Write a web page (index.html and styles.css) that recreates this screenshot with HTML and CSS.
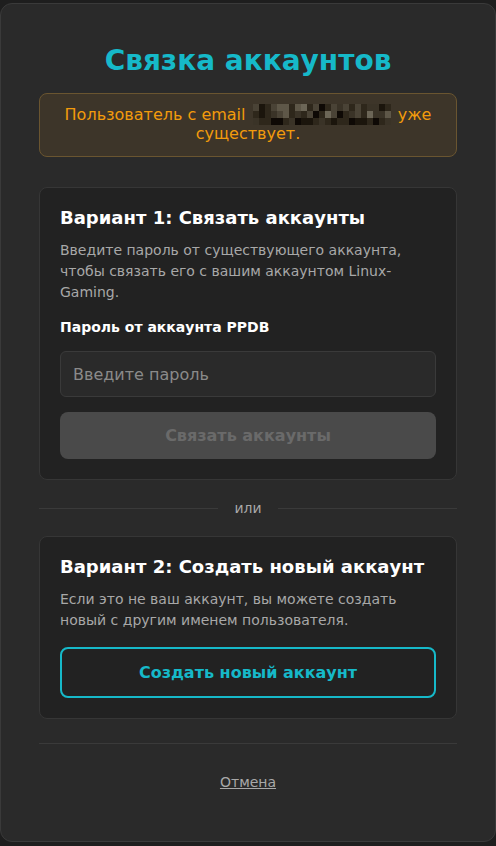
FILE: index.html
```html
<!DOCTYPE html>
<html lang="ru">
<head>
<meta charset="utf-8">
<link rel="stylesheet" href="styles.css">
</head>
<body>
<div class="modal">
  <h1 class="title">Связка аккаунтов</h1>
  <div class="warning">Пользователь с email <span class="mosaic"><i class="a"></i><i class="d"></i><i class="b"></i><i class="a"></i><i class="e"></i><i class="e"></i><i class="b"></i><i class="e"></i><i class="f"></i><i class="b"></i><i class="a"></i><i class="g"></i><i class="b"></i><i class="a"></i><i class="c"></i><i class="a"></i><i class="b"></i><i class="a"></i><i class="b"></i><i class="c"></i><i class="c"></i><i class="d"></i><i class="b"></i><i class="b"></i><i class="d"></i><i class="b"></i><i class="c"></i><i class="a"></i><i class="e"></i><i class="b"></i><i class="c"></i><i class="b"></i><i class="a"></i><i class="g"></i><i class="b"></i><i class="f"></i><i class="a"></i><i class="g"></i><i class="b"></i><i class="c"></i><i class="a"></i><i class="b"></i><i class="f"></i><i class="c"></i><i class="c"></i><i class="e"></i><i class="c"></i><i class="b"></i><i class="b"></i><i class="g"></i><i class="g"></i><i class="b"></i><i class="c"></i><i class="g"></i><i class="d"></i><i class="d"></i><i class="b"></i><i class="c"></i><i class="b"></i><i class="d"></i><i class="b"></i><i class="b"></i><i class="g"></i><i class="d"></i><i class="d"></i><i class="b"></i><i class="g"></i><i class="b"></i><i class="c"></i></span> уже существует.</div>

  <section class="card">
    <h2 class="card-title">Вариант 1: Связать аккаунты</h2>
    <p class="card-text">Введите пароль от существующего аккаунта, чтобы связать его с вашим аккаунтом Linux-Gaming.</p>
    <label class="field-label" for="pw">Пароль от аккаунта PPDB</label>
    <input class="input" id="pw" type="password" placeholder="Введите пароль">
    <button class="btn btn-disabled" type="button">Связать аккаунты</button>
  </section>

  <div class="divider"><span class="line"></span><span class="or">или</span><span class="line"></span></div>

  <section class="card">
    <h2 class="card-title">Вариант 2: Создать новый аккаунт</h2>
    <p class="card-text">Если это не ваш аккаунт, вы можете создать новый с другим именем пользователя.</p>
    <button class="btn btn-outline" type="button">Создать новый аккаунт</button>
  </section>

  <div class="footer">
    <a class="cancel" href="#">Отмена</a>
  </div>
</div>
</body>
</html>
```

FILE: styles.css
```css
* { box-sizing: border-box; }
html, body {
  margin: 0;
  padding: 0;
  background: #1e1e1e;
  font-family: "DejaVu Sans", "Noto Sans", sans-serif;
}
body { padding-top: 3px; }
.modal {
  width: 496px;
  height: 839px;
  background: #2a2a2a;
  border: 1px solid #3a3a3a;
  border-radius: 12px;
  padding: 40px 38px 0;
  display: flex;
  flex-direction: column;
}
.title {
  margin: 0 0 15px;
  text-align: center;
  color: #16b9c9;
  font-size: 28px;
  line-height: 34px;
  font-weight: bold;
}
.warning {
  background: #3d3529;
  border: 1px solid #6a5530;
  border-radius: 8px;
  color: #f29b0c;
  font-size: 16px;
  line-height: 19px;
  text-align: center;
  padding: 11px 20px 13px;
  margin-bottom: 30px;
}
.mosaic {
  display: inline-grid;
  grid-template-columns: repeat(23, 6px);
  grid-auto-rows: 7px;
  vertical-align: middle;
  margin: -8px 2px -6px;
}
.mosaic i { display: block; }
.mosaic .a { background: #4a4336; }
.mosaic .b { background: #2e271b; }
.mosaic .c { background: #3a3327; }
.mosaic .d { background: #1b150c; }
.mosaic .e { background: #5e5748; }
.mosaic .f { background: #6c6657; }
.mosaic .g { background: #0e0905; }
.card {
  background: #222222;
  border: 1px solid #363636;
  border-radius: 8px;
  padding: 18px 20px 20px;
  display: flex;
  flex-direction: column;
}
.card-title {
  margin: 0;
  color: #ffffff;
  font-size: 18px;
  line-height: 24px;
  font-weight: bold;
}
.card-text {
  margin: 10px 0 0;
  color: #a8a8a8;
  font-size: 14px;
  line-height: 21px;
}
.field-label {
  margin-top: 15px;
  color: #ffffff;
  font-size: 14px;
  line-height: 18px;
  font-weight: bold;
}
.input {
  margin-top: 15px;
  height: 46px;
  background: #2a2a2a;
  border: 1px solid #3a3a3a;
  border-radius: 6px;
  padding: 0 12px;
  font-family: inherit;
  font-size: 16px;
  color: #ddd;
}
.input::placeholder { color: #8a8a8a; }
.btn {
  font-family: inherit;
  font-size: 16px;
  font-weight: bold;
  border-radius: 8px;
  cursor: pointer;
}
.btn-disabled {
  margin-top: 15px;
  height: 47px;
  background: #4a4a4a;
  border: none;
  color: #6a6a6a;
}
.btn-outline {
  margin-top: 16px;
  height: 51px;
  background: transparent;
  border: 2px solid #16b9c9;
  color: #16b9c9;
}
.divider {
  display: flex;
  align-items: center;
  gap: 16px;
  margin: 19px 0;
}
.divider .line { flex: 1; height: 1px; background: #3a3a3a; }
.divider .or { color: #a8a8a8; font-size: 14px; line-height: 18px; }
.footer {
  margin-top: 24px;
  border-top: 1px solid #3a3a3a;
  padding-top: 28px;
  text-align: center;
}
.cancel {
  color: #a8a8a8;
  font-size: 14px;
  line-height: 20px;
  text-decoration: underline;
}
```
